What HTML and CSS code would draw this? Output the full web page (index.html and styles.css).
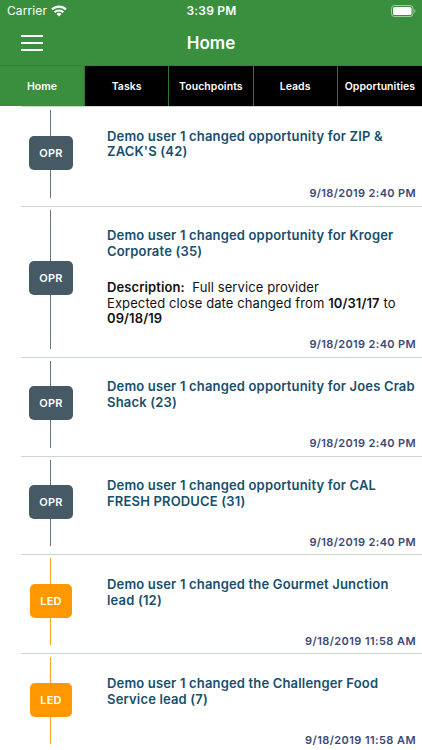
FILE: index.html
```html
<!DOCTYPE html>
<html lang="en">
<head>
  <meta charset="UTF-8">
  <meta name="viewport" content="width=device-width, initial-scale=1.0">
  <title>Home</title>
  <link rel="stylesheet" href="styles.css">
</head>
<body>

  <!-- Header -->
  <header class="header">
    <div class="status-bar">
      <div class="carrier">
        <span>Carrier</span>
        <svg class="wifi" width="16" height="12" viewBox="0 0 16 12">
          <path d="M1 4.5a10 10 0 0 1 14 0" fill="none" stroke="#fff" stroke-width="2.2"/>
          <path d="M3.6 7.2a6.3 6.3 0 0 1 8.8 0" fill="none" stroke="#fff" stroke-width="2"/>
          <path d="M8 11.5 5.5 9a3.6 3.6 0 0 1 5 0z" fill="#fff"/>
        </svg>
      </div>
      <span class="clock">3:39 PM</span>
      <svg class="battery" width="25" height="12" viewBox="0 0 25 12">
        <rect x="0.5" y="0.5" width="21.5" height="11" rx="3" fill="none" stroke="#a5cda7"/>
        <rect x="2" y="2" width="18.5" height="8" rx="1.6" fill="#fff"/>
        <path d="M23.3 4.2v3.6q1.2-.5 1.2-1.8t-1.2-1.8z" fill="#a5cda7"/>
      </svg>
    </div>
    <div class="nav-bar">
      <button class="menu-btn" aria-label="Menu"><span></span><span></span><span></span></button>
      <h1>Home</h1>
    </div>
  </header>

  <!-- Tabs -->
  <nav class="tabs">
    <a class="active" href="#">Home</a>
    <a href="#">Tasks</a>
    <a href="#">Touchpoints</a>
    <a href="#">Leads</a>
    <a href="#">Opportunities</a>
  </nav>

  <!-- Activity feed -->
  <main class="feed">
    <div class="entry">
      <div class="timeline"><span class="badge">OPR</span></div>
      <div class="content">
        <h2>Demo user 1 changed opportunity for ZIP &amp;<br>ZACK'S (42)</h2>
        <time>9/18/2019 2:40 PM</time>
      </div>
    </div>
    <div class="entry detailed">
      <div class="timeline"><span class="badge">OPR</span></div>
      <div class="content">
        <h2>Demo user 1 changed opportunity for Kroger<br>Corporate (35)</h2>
        <p><b>Description:</b>&nbsp; Full service provider<br>Expected close date changed from <b>10/31/17</b> to<br><b>09/18/19</b></p>
        <time>9/18/2019 2:40 PM</time>
      </div>
    </div>
    <div class="entry">
      <div class="timeline"><span class="badge">OPR</span></div>
      <div class="content">
        <h2>Demo user 1 changed opportunity for Joes Crab<br>Shack (23)</h2>
        <time>9/18/2019 2:40 PM</time>
      </div>
    </div>
    <div class="entry">
      <div class="timeline"><span class="badge">OPR</span></div>
      <div class="content">
        <h2>Demo user 1 changed opportunity for CAL<br>FRESH PRODUCE (31)</h2>
        <time>9/18/2019 2:40 PM</time>
      </div>
    </div>
    <div class="entry lead">
      <div class="timeline"><span class="badge">LED</span></div>
      <div class="content">
        <h2>Demo user 1 changed the Gourmet Junction<br>lead (12)</h2>
        <time>9/18/2019 11:58 AM</time>
      </div>
    </div>
    <div class="entry lead">
      <div class="timeline"><span class="badge">LED</span></div>
      <div class="content">
        <h2>Demo user 1 changed the Challenger Food<br>Service lead (7)</h2>
        <time>9/18/2019 11:58 AM</time>
      </div>
    </div>
  </main>

</body>
</html>
```
FILE: styles.css
```css
/* General Styling */
* {
  box-sizing: border-box;
}

body {
  font-family: Inter, "Liberation Sans", sans-serif;
  background-color: #fff;
  color: #111;
  margin: 0;
  height: 750px;
  overflow: hidden;
}

/* Header */
.header {
  background-color: #3a8f3e;
  color: #fff;
  height: 65px;
}

.status-bar {
  display: grid;
  grid-template-columns: 1fr auto 1fr;
  align-items: center;
  height: 21px;
  padding: 0 6px 0 7px;
  font-size: 12px;
}

.carrier {
  display: flex;
  align-items: center;
  gap: 4px;
  letter-spacing: 0.1px;
}

.clock {
  font-weight: 600;
  letter-spacing: 0.2px;
}

.battery {
  justify-self: end;
}

.nav-bar {
  display: grid;
  grid-template-columns: 1fr auto 1fr;
  align-items: center;
  height: 43px;
  padding: 0 21px;
}

.menu-btn {
  display: flex;
  flex-direction: column;
  gap: 5px;
  width: 22px;
  padding: 0;
  border: none;
  background: none;
}

.menu-btn span {
  width: 22px;
  height: 2px;
  background-color: #fff;
}

h1 {
  margin: 0;
  font-size: 17px;
  font-weight: 600;
}

/* Tabs */
.tabs {
  display: grid;
  grid-template-columns: 85px repeat(4, 1fr);
  height: 41px;
  border-top: 1px solid #35823a;
}

.tabs a {
  display: flex;
  align-items: center;
  justify-content: center;
  background-color: #000;
  border-right: 1px solid #2f7533;
  color: #fff;
  font-size: 10.5px;
  font-weight: 600;
  letter-spacing: 0.05px;
  text-decoration: none;
}

.tabs a:last-child {
  border-right: none;
}

.tabs .active {
  background-color: #3a8f3e;
}

/* Activity feed */
.feed {
  padding-left: 21px;
}

.entry {
  display: flex;
  height: 98.8px;
  border-bottom: 1px solid #c8d9c8;
}

.entry:first-child {
  height: 100.7px;
  border-top: 1px solid #c8d9c8;
}

.entry.detailed {
  height: 151.2px;
}

.timeline {
  display: flex;
  flex: none;
  align-items: center;
  justify-content: center;
  width: 60px;
  margin: 3px 26px 8px 0;
  padding-bottom: 2px;
  background: linear-gradient(#667780, #667780) 29px 0 / 1px 100% no-repeat;
}

.badge {
  width: 44px;
  height: 34px;
  border-radius: 5px;
  background-color: #455a64;
  color: #fff;
  font-size: 11px;
  font-weight: 600;
  line-height: 34px;
  letter-spacing: 0.2px;
  text-align: center;
}

.lead .timeline {
  background-image: linear-gradient(#f7a62c, #f7a62c);
}

.lead .badge {
  width: 42px;
  background-color: #ff9800;
}

.content {
  display: flex;
  flex: 1;
  flex-direction: column;
  padding: 21.5px 6px 4.5px 0;
  white-space: nowrap;
}

h2 {
  margin: 0;
  color: #174f6c;
  font-size: 13px;
  font-weight: 600;
  line-height: 15.8px;
  letter-spacing: 0.17px;
}

p {
  margin: 20px 0 0;
  color: #111;
  font-size: 13px;
  line-height: 15.8px;
  letter-spacing: 0.1px;
}

b {
  font-weight: 600;
}

time {
  margin-top: auto;
  color: #3b4a75;
  font-size: 11px;
  font-weight: 600;
  line-height: 15px;
  letter-spacing: 0.35px;
  text-align: right;
}

.lead time {
  letter-spacing: 0.42px;
}
```
